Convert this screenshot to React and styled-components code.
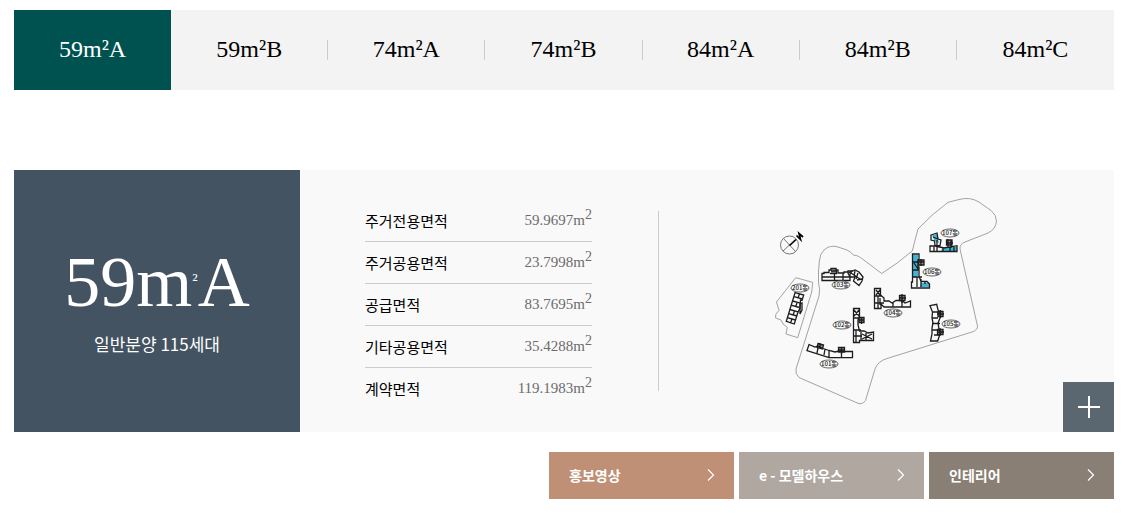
import React, { useState } from "react";
import styled, { createGlobalStyle } from "styled-components";

const serif = `"Liberation Serif", "Times New Roman", serif`;
const sans = `"Noto Sans CJK KR", "Noto Sans", sans-serif`;

const GlobalStyle = createGlobalStyle`
  *, *::before, *::after { box-sizing: border-box; }
  body { margin: 0; background: #fff; color: #000; font-family: ${sans}; }
`;

const Page = styled.main`
  padding: 10px 14px 28px;
`;

const TabList = styled.ul`
  display: flex;
  margin: 0;
  padding: 0;
  list-style: none;
  background: #f3f3f3;
`;

const TabItem = styled.li`
  display: flex;
  flex: 1;
  align-items: center;

  &:not(:first-child):not(:last-child)::after {
    content: "";
    width: 1px;
    height: 20px;
    background: #ccc;
  }
`;

const Tab = styled.button`
  flex: 1;
  height: 80px;
  padding: 0 0 2px;
  border: 0;
  background: ${(p) => (p.$active ? "#005250" : "transparent")};
  color: ${(p) => (p.$active ? "#fff" : "#000")};
  font: 24px/32px ${serif};
  cursor: pointer;
`;

const Panel = styled.section`
  position: relative;
  display: flex;
  min-height: 262px;
  margin-top: 80px;
  background: #f9f9f9;
`;

const Summary = styled.div`
  display: flex;
  flex-direction: column;
  align-items: center;
  width: 26%;
  padding-top: 72px;
  background: #435362;
  color: #fff;
`;

const TypeName = styled.h2`
  margin: 0;
  font: 72px/80px ${serif};
`;

const Square = styled.span`
  font-size: 18px;
  vertical-align: 20px;
  line-height: 1;
`;

const Households = styled.p`
  margin: 10px 0 0;
  font-size: 17px;
  line-height: 24px;
`;

const Details = styled.div`
  display: flex;
  align-items: center;
  padding: 8px 66px 0 65px;
`;

const AreaTable = styled.table`
  width: 227px;
  border-spacing: 0;

  tr:not(:last-child) > * {
    border-bottom: 1px solid #ccc;
  }
`;

const AreaName = styled.th`
  height: 42px;
  padding: 0;
  font-size: 15px;
  font-weight: 400;
  line-height: 24px;
  text-align: left;
`;

const AreaValue = styled.td`
  padding: 0 0 2px;
  color: #6c6c6c;
  font: 15px/20px ${serif};
  text-align: right;

  sup {
    font-size: 14px;
    line-height: 0;
  }
`;

const PlanArea = styled.div`
  display: flex;
  flex: 1;
  align-items: center;
  justify-content: center;

  &::before {
    content: "";
    width: 1px;
    height: 180px;
    background: #ccc;
  }
`;

const PlanDrawing = styled.svg`
  display: block;
  width: 230px;
  margin: 0 auto;
`;

const ExpandButton = styled.button`
  position: absolute;
  right: 0;
  bottom: 0;
  display: grid;
  place-items: center;
  width: 51px;
  height: 50px;
  padding: 0;
  border: 0;
  background: #5b6770;
  cursor: pointer;
`;

const LinkBar = styled.nav`
  display: flex;
  justify-content: flex-end;
  gap: 5px;
  margin-top: 20px;
`;

const MediaLink = styled.a`
  display: flex;
  align-items: center;
  justify-content: space-between;
  width: 185px;
  height: 47px;
  padding: 0 19px 2px 20px;
  background: ${(p) => p.$color};
  color: #fff;
  font-size: 14px;
  font-weight: 700;
  text-decoration: none;
`;

const types = ["59m²A", "59m²B", "74m²A", "74m²B", "84m²A", "84m²B", "84m²C"];

const areas = [
  ["주거전용면적", "59.9697"],
  ["주거공용면적", "23.7998"],
  ["공급면적", "83.7695"],
  ["기타공용면적", "35.4288"],
  ["계약면적", "119.1983"],
];

const links = [
  ["홍보영상", "#bf9075"],
  ["e - 모델하우스", "#b0a7a0"],
  ["인테리어", "#8a7f74"],
];

const buildingLabels = [
  ["201동", 800, 288],
  ["103동", 841, 285],
  ["107동", 950, 233],
  ["106동", 932, 272],
  ["104동", 893, 313],
  ["105동", 951, 324],
  ["102동", 842, 325],
  ["101동", 829, 364],
];

function SitePlan() {
  return (
    <PlanDrawing viewBox="772 191 230 220" role="img" aria-label="단지 배치도">
      <g fill="none" stroke="#a3a3a3" strokeWidth="1" strokeLinejoin="round">
        <path d="M881.7 273.5 860.5 257.5Q858 255.500 853.500 255Q850 251.500 847 250L838 247Q830 244.500 824 250Q820 254 819.500 260L818.500 271 818.500 283Q820.500 289 819 296L796 369Q795 374 799 377.500L858 403.300Q862 405 865.500 400.500L875 369Q878 361 887 358.500L972 332Q978 330 977.500 326L960 249Q959.500 244 965 242L988 233Q996 229 996.500 221Q996.500 215 991 210.500L979 202Q970 196.500 959 199.500L948 202.300Q931 215 918 229Q915 240 912.300 251Q897 264 881.700 273.500Z" />
        <path d="M795.700 277.700 812.700 282.300 811.700 292 797.700 337.700 786 334 787.300 327.300 783 324 781 320 775.500 318Q774.500 314 779 310.500L776.500 302Z" />
        <g stroke="#777">
          <circle cx="789.500" cy="245" r="9" />
          <path d="M783.500 238.500 795.500 251.500M783 251 789.500 245" />
        </g>
      </g>
      <path d="M789.500 245.500 796 239.500" stroke="#000" strokeWidth="1.700" />
      <path d="M796.500 235.500 800.500 239.500 799 233.500 803 237" fill="none" stroke="#000" strokeWidth="1.700" />

      <g fill="#3fb4d8">
        <path d="M932 235 937 234 939 243 934.500 241Z" />
        <path d="M943 247 957 247 957 251 941 251Z" />
        <path d="M913 255 918 255 918 276 913 278Z" />
        <path d="M921 283 929 283 929 287 920 287Z" />
      </g>

      {/* stair and lift cores */}
      <g fill="#999">
        <path d="M831 268.500H836.500V273H831ZM946.500 240H952V245H946.500ZM918.500 260H924V265H918.500ZM899.500 295.500H905V300.500H899.500ZM938 311.500H943V316.500H938ZM938 329.500H943V334.500H938ZM859 317.500H864V322.500H859ZM818 343.500 823.500 345 822.500 349 817 347.500ZM838.500 347.500H844.500V352H838.500Z" />
      </g>

      <g fill="none" stroke="#1c1c1c" strokeWidth="1.300">
        {/* 201 */}
        <path d="M795 292.700 803.700 295 802 300.500 800.500 300 800 308 797.500 313.500 794.300 324 786.300 321.300Z" />
        <path d="M794 296.700 802.500 299M792.500 301 800.500 303.200M791 305.200 799.500 307.500M789.700 309.500 798 311.800M788.500 313.700 797 316M787.300 317.700 795.500 320M799.500 294 798 298M797 303 795.500 307M794.500 311 793 315M792 319 790.500 323" />
        <path d="M802 303v7l-2 4v-10z" />
        {/* 103 */}
        <path d="M822 280.500V273.500H824V272.500H829V270H831V268.500H836V270H838V273H844V272H848V271H852L850 274V280.500Z" />
        <path d="M834.500 273V280.500M843 273V280.500M822 277H850M831 271H836.500V273.500H830" />
        <path d="M848 273 855 270 859 272 863 277 862 281 859 285.500 853.500 281 855 277 850 277ZM851 273 860 279M855 271 854 276M858 273 856 279M862 279 857 280" />
        {/* 107 */}
        <path d="M931 235 937 233 938 239 941 240 940 245.700 935 245.500 934.500 241 931 240ZM930 246H934V251.500H930ZM935 246 944 248 957 245.700V251.500H930M937 246V251M943 247V251.500M950 247V251.500M954 247V251M937 240V245M933 237 938 239" />
        <path d="M946.500 240H952V245H946.500ZM948 239V247M951 240V248M946 243H953" />
        {/* 106 */}
        <path d="M912.500 254H919V260H918V267H919V276L921 281.500H927L929.500 284V288H911.500V282H912.500ZM912 262H919M912 270H919M912 277H922M917 277V287M921 279V287M925 282V284M914 263 918 269" />
        <path d="M918.500 260H924V265H918.500ZM921 259V266M918 262H924" />
        {/* 104 */}
        <path d="M874.500 288.500H880.500V295L884 298V301H889L892 303L896 300.500H902L905 303L910.500 301V307H884L881 304V308.500H874.500ZM874.500 296H882M874.500 303H884M878 296V308M893 302V307M902 301V307M880 298V305M876 290 880 295M880 290 876 295" />
        <path d="M899.500 295.500H905V300.500H899.500ZM902 294V303M899 298H906" />
        {/* 105 */}
        <path d="M930 305.700 936.700 304.300 938 310 940 312V318L938 323 939 329 941 332 939 337 937.700 341H930.500L932 334V328L933 323 932 318 932.500 312ZM932 312H940M932 318H938M932 323.500H940M932 330H940M934 335H940" />
        <path d="M938 311.500H943V316.500H938ZM937.500 329.500H943V334.500H937.500ZM940.500 310V318M940 328V336M937 314H944M937 332H944" />
        {/* 102 */}
        <path d="M853.500 308.500H859.500V317L858 320V325L859.500 331H864L868 333 873.500 332V340.500H859.500V342.500H853.500ZM853.500 318H859.500M853.500 330H861M853.500 336H862M856 330V342M861 332V340M866 333V340M854 310 859 316M859 310 854 316M862 334 872 339M872 334 862 339" />
        <path d="M859 317.500H864V322.500H859ZM861.500 317V324M859 320H864" />
        {/* 101 */}
        <path d="M809 344.500 815 347 818 346 823 348.500 829 350.500 835 352 839 351 845 351.500 852.500 351.500V357.700H829L807 350.500ZM818 348 817 353M829 351V358M841.500 352V358M825 349 824 355" />
        <path d="M818 343.500 823.500 345 822.500 349 817 347.500ZM838.500 347.500H844.500V352H838.500ZM841.500 347V354M838 350H845M820 343V348" />
      </g>

      {buildingLabels.map(([label, x, y]) => (
        <g key={label}>
          <ellipse cx={x} cy={y} rx="9" ry="4" fill="#f9f9f9" stroke="#666" strokeWidth="1" />
          <text x={x} y={y + 2} textAnchor="middle" fontFamily={sans} fontSize="6" fontWeight="500" fill="#111">
            {label}
          </text>
        </g>
      ))}
    </PlanDrawing>
  );
}

function Chevron() {
  return (
    <svg width="8" height="14" viewBox="0 0 8 14" fill="none" stroke="#fff" strokeWidth="1.200" aria-hidden="true">
      <path d="M1 1.500 6.500 7 1 12.500" />
    </svg>
  );
}

export default function App() {
  const [active, setActive] = useState(0);

  return (
    <>
      <GlobalStyle />
      <Page>
        <TabList>
          {types.map((type, i) => (
            <TabItem key={type}>
              <Tab type="button" $active={i === active} aria-pressed={i === active} onClick={() => setActive(i)}>
                {type}
              </Tab>
            </TabItem>
          ))}
        </TabList>

        <Panel>
          <Summary>
            <TypeName>
              59m<Square>²</Square>A
            </TypeName>
            <Households>일반분양 115세대</Households>
          </Summary>
          <Details>
            <AreaTable>
              <tbody>
                {areas.map(([name, value]) => (
                  <tr key={name}>
                    <AreaName scope="row">{name}</AreaName>
                    <AreaValue>
                      {value}m<sup>2</sup>
                    </AreaValue>
                  </tr>
                ))}
              </tbody>
            </AreaTable>
          </Details>
          <PlanArea>
            <SitePlan />
          </PlanArea>
          <ExpandButton type="button" aria-label="확대 보기">
            <svg width="22" height="22" viewBox="0 0 22 22" stroke="#fff" strokeWidth="2" aria-hidden="true">
              <path d="M11 0V22M0 11H22" />
            </svg>
          </ExpandButton>
        </Panel>

        <LinkBar>
          {links.map(([label, color]) => (
            <MediaLink key={label} href="#" $color={color}>
              {label}
              <Chevron />
            </MediaLink>
          ))}
        </LinkBar>
      </Page>
    </>
  );
}
